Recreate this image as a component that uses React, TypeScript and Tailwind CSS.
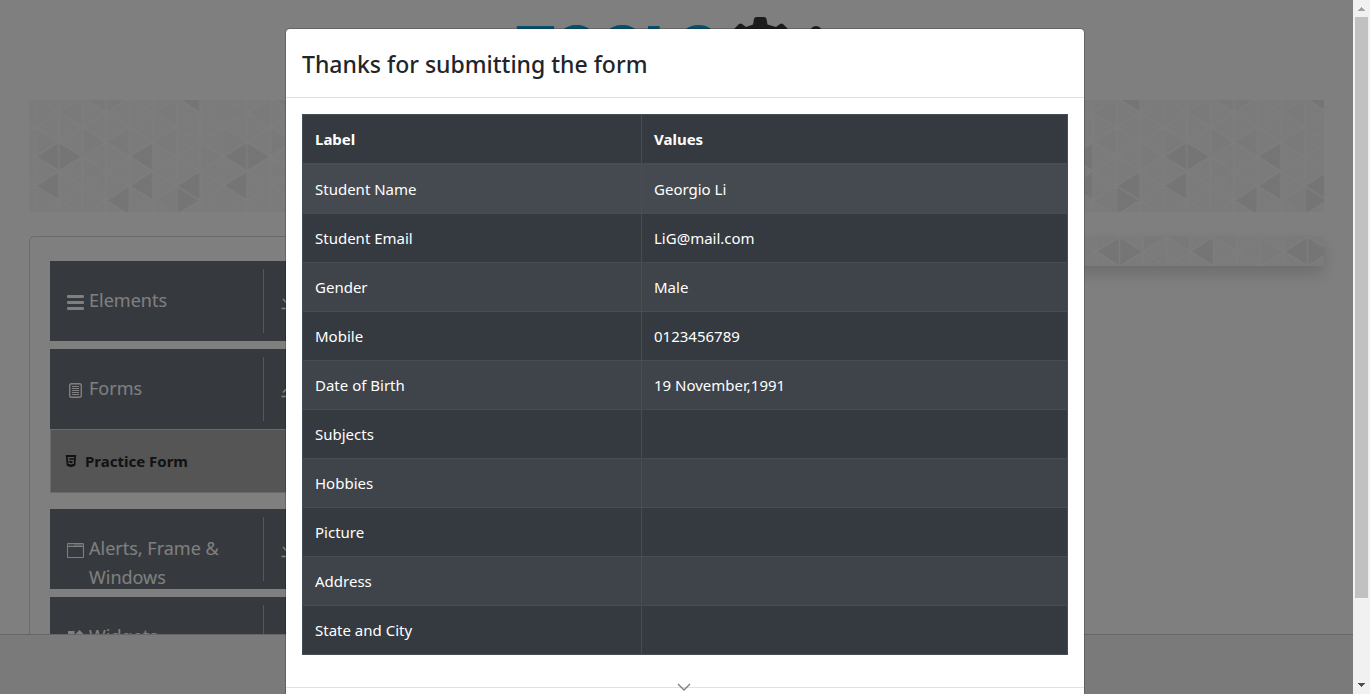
import React from "react";
import { FaHtml5 } from "react-icons/fa";

const COLUMN = 23.5;
const SIDE = 29.33;
const TILE = COLUMN * 8;

type Facet = { col: number; y: number; dir: "left" | "right"; fill: string };

const DARK = "#ebebeb";
const MID = "#f2f2f2";
const LIGHT = "#f5f5f5";

const facets: Facet[] = [
  { col: 0, y: 56.6, dir: "left", fill: DARK },
  { col: 1, y: 56.6, dir: "right", fill: DARK },
  { col: 0, y: 86, dir: "left", fill: DARK },
  { col: 2, y: 41.9, dir: "right", fill: MID },
  { col: 3, y: 41.9, dir: "left", fill: MID },
  { col: 3, y: 100.5, dir: "left", fill: DARK },
  { col: 4, y: 56.6, dir: "left", fill: DARK },
  { col: 4, y: 86, dir: "left", fill: DARK },
  { col: 6, y: 86, dir: "left", fill: DARK },
  { col: 6, y: 100.5, dir: "right", fill: DARK },
  { col: 6, y: -2, dir: "left", fill: DARK },
  { col: 2, y: -2, dir: "left", fill: MID },
  { col: 3, y: -2, dir: "right", fill: MID },
  { col: 0, y: 41.9, dir: "right", fill: LIGHT },
  { col: 5, y: 41.9, dir: "left", fill: LIGHT },
  { col: 7, y: 56.6, dir: "right", fill: LIGHT },
  { col: 1, y: 12.6, dir: "left", fill: LIGHT },
  { col: 5, y: 12.6, dir: "left", fill: LIGHT },
  { col: 2, y: 71.2, dir: "left", fill: LIGHT },
  { col: 5, y: 100.5, dir: "left", fill: LIGHT },
];

function facetPoints({ col, y, dir }: Facet) {
  const left = col * COLUMN;
  const right = left + COLUMN;
  const h = SIDE / 2;
  return dir === "left"
    ? `${left},${y} ${right},${y - h} ${right},${y + h}`
    : `${right},${y} ${left},${y - h} ${left},${y + h}`;
}

function meshPath() {
  let d = "";
  for (let i = 0; i < 8; i++) {
    const x0 = i * COLUMN;
    const x1 = x0 + COLUMN;
    d += `M${x0} -30V180`;
    for (let k = -2; k < 6; k++) {
      const a = (i % 2 === 0 ? 27.2 : 12.6) + k * SIDE;
      d += `M${x0} ${a}L${x1} ${a - SIDE / 2}M${x0} ${a}L${x1} ${a + SIDE / 2}`;
    }
  }
  return d;
}

function TriangleTexture({ id, dx, dy, className }: { id: string; dx: number; dy: number; className: string }) {
  return (
    <svg className={className} aria-hidden="true">
      <defs>
        <pattern id={id} width={TILE} height={116} patternUnits="userSpaceOnUse" patternTransform={`translate(${dx} ${dy})`}>
          <rect width={TILE} height={116} fill="#f7f7f7" />
          {facets.map((f, i) => (
            <polygon key={i} points={facetPoints(f)} fill={f.fill} />
          ))}
          <path d={meshPath()} stroke="#fbfbfb" strokeWidth="1.6" fill="none" />
        </pattern>
      </defs>
      <rect width="100%" height="100%" fill={`url(#${id})`} />
    </svg>
  );
}

function BarsIcon() {
  return (
    <svg viewBox="0 0 18 16" className="h-4 w-[18px]" fill="currentColor" aria-hidden="true">
      <rect x="0" y="1" width="17" height="3" rx="1" />
      <rect x="0" y="7" width="17" height="3" rx="1" />
      <rect x="0" y="13" width="17" height="3" rx="1" />
    </svg>
  );
}

function SheetIcon() {
  return (
    <svg viewBox="0 0 18 16" className="h-4 w-[18px]" fill="none" stroke="currentColor" aria-hidden="true">
      <rect x="2.7" y="1.7" width="11.6" height="13.6" rx="1.8" strokeWidth="1.4" />
      <path d="M5 4.5h7M5 6.5h7M5 8.5h7M5 10.5h7M5 12.5h7" strokeWidth="1" />
    </svg>
  );
}

function WindowIcon() {
  return (
    <svg viewBox="0 0 18 16" className="h-4 w-[18px]" fill="none" stroke="currentColor" aria-hidden="true">
      <rect x="0.5" y="1.5" width="16" height="14" rx="0.8" strokeWidth="1.1" />
      <path d="M1 4.5h16" strokeWidth="1" />
      <path d="M2 3h1.2M4.3 3h1.2M6.5 3h9" strokeWidth="1.2" />
    </svg>
  );
}

function WidgetsIcon() {
  return (
    <svg viewBox="0 0 18 16" className="h-4 w-[18px]" fill="currentColor" aria-hidden="true">
      <path d="M1 1h6.5v6.5h-6.5zM1 9.5h6.5v6.5h-6.5zM9.5 9.5h6.5v6.5h-6.5zM12.500 0l4 4-4 4-4-4z" />
    </svg>
  );
}

function ToggleIcon({ open }: { open: boolean }) {
  return (
    <svg viewBox="0 0 16 16" className="h-4 w-4" fill="none" stroke="currentColor" strokeWidth="1.6" aria-hidden="true">
      <path d={open ? "M2 9.5l6-6 6 6" : "M2 4l6 6 6-6"} />
      <path d="M0.5 13.5h15" />
    </svg>
  );
}

function MenuGroup({ icon, label, open = false }: { icon: React.ReactNode; label: string; open?: boolean }) {
  return (
    <button type="button" className="flex h-20 w-full overflow-hidden bg-[#6c757d] py-2 text-left text-white">
      <span className="flex w-[214px] items-start border-r border-[#aab0b0] pt-[17px] pl-[17px]">
        <span className="mt-2 mr-1 shrink-0">{icon}</span>
        <span className="text-[18px] leading-[29px]">{label}</span>
      </span>
      <span className="mt-[26px] ml-[17px]">
        <ToggleIcon open={open} />
      </span>
    </button>
  );
}

function Logo() {
  return (
    <a href="#" aria-label="TOOLS" className="flex items-start">
      <span className="pt-px font-['Inter'] text-[59px] leading-[60px] font-black text-[#0fa0d8]">TOOLS</span>
      <svg viewBox="0 0 104 60" className="ml-4 h-[60px] w-[104px]" fill="#383838" aria-hidden="true">
        <path d="M19 7.5L20 2Q20.5 0 22.5 0H30Q32 0 32.5 2L33.5 7.5L42 10L46 7Q47.5 6 49 7L54 12L51 17L56 29L51 45L38 54H16L5 45L0 29L4 17L0 12L5 7Q6.5 6 8 7L12 10Z" />
        <path d="M82 9q5 0 7 7l13 40h-12l-8-26-8 26h-12l13-40q2-7 7-7z" />
      </svg>
    </a>
  );
}

const rows: [string, string][] = [
  ["Student Name", "Georgio Li"],
  ["Student Email", "LiG@mail.com"],
  ["Gender", "Male"],
  ["Mobile", "0123456789"],
  ["Date of Birth", "19 November,1991"],
  ["Subjects", ""],
  ["Hobbies", ""],
  ["Picture", ""],
  ["Address", ""],
  ["State and City", ""],
];

const highlightedRow = 0;

function rowTone(index: number) {
  if (index === highlightedRow) return "bg-[#454a50]";
  return index % 2 === 0 ? "bg-white/5" : "";
}

function SubmissionDialog() {
  return (
    <div
      role="dialog"
      aria-modal="true"
      aria-labelledby="dialog-title"
      className="mx-auto min-h-full w-full max-w-[800px] rounded-[5px] border border-black/20 bg-white bg-clip-padding"
    >
      <header className="border-b border-[#dee2e6] px-4 pt-[17px] pb-[15px]">
        <h1 id="dialog-title" className="text-[23px] leading-9 font-medium text-[#212529]">
          Thanks for submitting the form
        </h1>
      </header>
      <div className="p-4">
        <table className="mb-4 w-full border-collapse border border-[#454d55] bg-[#343a40] text-left text-[15px] leading-6 text-white">
          <thead>
            <tr>
              <th className="w-[339px] border border-b-2 border-[#454d55] p-3 font-bold">Label</th>
              <th className="border border-b-2 border-[#454d55] p-3 font-bold">Values</th>
            </tr>
          </thead>
          <tbody>
            {rows.map(([label, value], index) => (
              <tr key={label} className={rowTone(index)}>
                <td className="border border-[#454d55] p-3">{label}</td>
                <td className="border border-[#454d55] p-3">{value}</td>
              </tr>
            ))}
          </tbody>
        </table>
      </div>
      <footer className="border-t border-[#dee2e6] p-3" />
    </div>
  );
}

function ScrollBar() {
  return (
    <div className="flex w-[17px] shrink-0 flex-col items-center bg-[#f1f1f1]" aria-hidden="true">
      <svg viewBox="0 0 17 17" className="h-[17px] w-[17px] shrink-0" fill="#a3a3a3">
        <path d="M8 7h1v1h1v1h1v1h1v1H5v-1h1V9h1V8h1z" />
      </svg>
      <div className="min-h-0 w-full flex-1 px-0.5">
        <div className="h-[88%] bg-[#c1c1c1]" />
      </div>
      <svg viewBox="0 0 17 17" className="h-[17px] w-[17px] shrink-0" fill="#505050">
        <path d="M5 6h7v1h-1v1h-1v1H9v1H8V9H7V8H6V7H5z" />
      </svg>
    </div>
  );
}

export default function App() {
  return (
    <div className="flex h-screen overflow-hidden bg-white font-['Noto_Sans',sans-serif]">
      <div className="relative flex min-w-0 flex-1 flex-col">
        <main className="min-h-0 flex-1 overflow-hidden px-[29px]">
          <div className="flex h-[100px] justify-center pt-[17px]">
            <Logo />
          </div>
          <TriangleTexture id="hero-texture" dx={6.5} dy={0} className="block h-28 w-full" />
          <div className="mt-6 flex items-start">
            <nav className="w-[318px] shrink-0 rounded-[5px] border border-[#d4d4d4] px-5 pt-6 pb-40" aria-label="Sections">
              <div className="flex flex-col gap-2">
                <MenuGroup icon={<BarsIcon />} label="Elements" />
                <div>
                  <MenuGroup icon={<SheetIcon />} label="Forms" open />
                  <a
                    href="#"
                    className="mb-2 flex h-16 items-center gap-2 border border-[#d0d6d6] bg-[#aaaaaa] pl-3.5 text-[15px] font-bold text-[#212529]"
                  >
                    <FaHtml5 className="h-3.5 w-3" aria-hidden="true" />
                    Practice Form
                  </a>
                </div>
                <MenuGroup icon={<WindowIcon />} label="Alerts, Frame & Windows" />
                <MenuGroup icon={<WidgetsIcon />} label="Widgets" />
              </div>
            </nav>
            <div className="ml-auto h-[30px] w-[318px] shadow-[0_8px_16px_rgba(0,0,0,0.15)]">
              <TriangleTexture id="strip-texture" dx={90} dy={-41} className="block h-full w-full" />
            </div>
          </div>
        </main>
        <footer className="h-[60px] shrink-0 border-t border-[#cccccc] bg-[#f5f5f5]" />
        <div className="absolute inset-0 overflow-hidden bg-black/50 pt-7 pl-[17px]">
          <SubmissionDialog />
        </div>
        <svg
          viewBox="0 0 14 8"
          className="absolute bottom-[3px] left-1/2 h-2 w-3.5"
          fill="none"
          stroke="#808080"
          strokeWidth="1.4"
          aria-hidden="true"
        >
          <path d="M1 1l6 6 6-6" />
        </svg>
      </div>
      <ScrollBar />
    </div>
  );
}
